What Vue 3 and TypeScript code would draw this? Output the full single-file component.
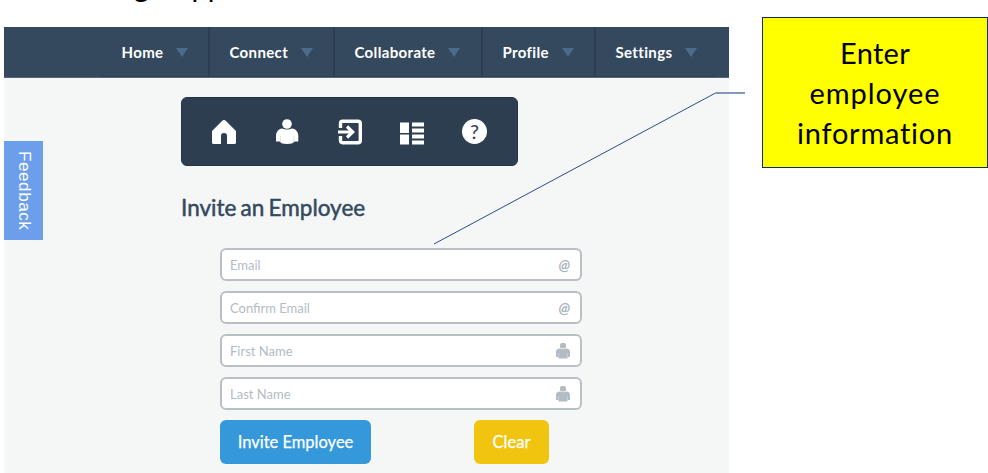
<script setup lang="ts">
interface MenuItem { label: string }
interface Field { label: string; icon: 'at' | 'person'; type: string }

const menu: MenuItem[] = [
  { label: 'Home' },
  { label: 'Connect' },
  { label: 'Collaborate' },
  { label: 'Profile' },
  { label: 'Settings' },
]

const fields: Field[] = [
  { label: 'Email', icon: 'at', type: 'text' },
  { label: 'Confirm Email', icon: 'at', type: 'text' },
  { label: 'First Name', icon: 'person', type: 'text' },
  { label: 'Last Name', icon: 'person', type: 'text' },
]
</script>

<template>
  <div class="slide">
    <div class="caption"><span>g</span><span>app</span></div>

    <div class="app">
      <nav class="nav">
        <a v-for="item in menu" :key="item.label" class="nav-item">
          <span>{{ item.label }}</span>
          <i class="caret"></i>
        </a>
      </nav>

      <main class="content">
        <div class="toolbar">
          <svg viewBox="0 0 26 26"><path d="M1 12 11 2Q13 0 15 2L25 12V23.500Q25 25 23.500 25H16V17Q16 14 13 14T10 17V25H2.500Q1 25 1 23.500Z" /></svg>
          <svg viewBox="0 0 26 26"><circle cx="13" cy="5" r="4.800" /><path d="M8 9.500Q13 11.500 18 9.500C22 10 24.300 13 24.300 17V22.500H20.500Q19 25 13 25T5.800 22.500H2V17C2 13 4.500 10 8 9.500Z" /><path class="cut" d="M6.500 17V22.500M19.700 17V22.500" /></svg>
          <svg viewBox="0 0 26 26"><path class="line" d="M3.500 9V4.500Q3.500 2.300 5.500 2.300H21Q23.300 2.300 23.300 4.500V21.500Q23.300 23.700 21 23.700H5.500Q3.500 23.700 3.500 21.500V17" /><path class="arrow" d="M1 13H15M10 7.500 15.700 13 10 18.500" /></svg>
          <svg viewBox="0 0 26 26"><path d="M1 3.500H10V14H1ZM1 15.500H10V25.500H1ZM13 3.500H25V7.500H13ZM13 9.500H25V13.500H13ZM13 15.500H25V19.500H13ZM13 21.500H25V25.500H13Z" /></svg>
          <div class="help">?</div>
        </div>

        <h1>Invite an Employee</h1>

        <form class="form" @submit.prevent>
          <div v-for="field in fields" :key="field.label" class="field">
            <input :type="field.type" :placeholder="field.label" :aria-label="field.label" />
            <span v-if="field.icon === 'at'" class="at">@</span>
            <svg v-else class="person" viewBox="0 0 14 16"><rect x="4" y="0" width="6" height="5.500" rx="1.800" /><path d="M4 5.600Q7 7 10 5.600Q14 6 14 9V14H11.500V15.500H2.500V14H0V9Q0 6 4 5.600Z" /><path class="slit" d="M2.700 10V14M11.300 10V14" /></svg>
          </div>
          <div class="actions">
            <button type="submit" class="btn invite">Invite Employee</button>
            <button type="reset" class="btn clear">Clear</button>
          </div>
        </form>
      </main>

      <div class="feedback"><span>Feedback</span></div>
    </div>

    <svg class="leader" viewBox="0 0 988 473"><path d="M434 244 715.500 93" /><path class="flat" d="M715.500 93H745" /></svg>
    <div class="callout">
      <span class="c1">Enter</span>
      <span class="c2">employee</span>
      <span class="c3">information</span>
    </div>
  </div>
</template>

<style>
body { background: #fff; }
</style>

<style scoped>
* { box-sizing: border-box; }
.slide {
  position: relative;
  width: 988px;
  height: 473px;
  overflow: hidden;
  background: #fff;
  font-family: Lato, "Liberation Sans", sans-serif;
  font-variant-ligatures: none;
}
.caption {
  height: 27px;
  padding-left: 134px;
  display: flex;
  gap: 28px;
  font-size: 29px;
  line-height: 35px;
  color: #000;
}
.caption span { margin-top: -32px; }
.app {
  position: relative;
  width: 725px;
  height: 446px;
  margin-left: 4px;
  background: #f5f7f7;
}
.nav {
  height: 51px;
  padding-left: 98px;
  display: grid;
  grid-template-columns: 108px 125px 148px 113px 119px;
  background: #34495e;
  border-bottom: 1px solid #52687c;
}
.nav-item {
  display: flex;
  align-items: center;
  gap: 13px;
  padding-left: 19.500px;
  color: #fff;
  font-size: 15px;
  font-weight: 700;
  letter-spacing: .35px;
  border-right: 2px solid #2c3e50;
  border-bottom: 1px solid #2c3e50;
}
.nav-item:last-child { border-right: 0; }
.caret {
  border: 6px solid transparent;
  border-top: 9px solid #4c6b8b;
  border-bottom: 0;
  margin-top: 2px;
}
.content { padding: 19px 0 0 177px; }
.toolbar {
  width: 337px;
  height: 69px;
  padding: 0 30px 0 29px;
  display: flex;
  align-items: center;
  justify-content: space-between;
  border-radius: 6px;
  background: #2c3e50;
  border: 1px solid #22344a;
}
.toolbar svg { width: 26px; height: 26px; fill: #fff; }
.toolbar .cut { stroke: #d5d9dd; stroke-width: .7; fill: none; }
.toolbar .line { fill: none; stroke: #fff; stroke-width: 3.400; }
.toolbar .arrow { fill: none; stroke: #fff; stroke-width: 3.200; }
.help {
  width: 25px;
  height: 25px;
  border-radius: 50%;
  background: #fff;
  color: #2c3e50;
  font: 400 20px/24px Lato, sans-serif;
  text-align: center;
}
h1 {
  margin: 27px 0 0;
  height: 30px;
  font-size: 22.500px;
  line-height: 30px;
  font-weight: 400;
  word-spacing: -1.500px;
  -webkit-text-stroke: .5px #34495e;
  color: #34495e;
  white-space: nowrap;
}
.form {
  margin: 25px 0 0 39px;
  width: 362px;
  display: flex;
  flex-direction: column;
  gap: 10px;
}
.field {
  height: 33px;
  display: flex;
  align-items: center;
  justify-content: space-between;
  padding: 0 10px 0 8px;
  border: 2px solid #b8c0c6;
  border-radius: 6px;
  background: #fff;
}
.field input {
  border: 0;
  outline: 0;
  padding: 0;
  width: 200px;
  font: 13px/20px Lato, sans-serif;
  background: none;
}
.field input::placeholder { color: #b2bcc5; opacity: 1; }
.at { color: #a9b4be; font-size: 15px; font-weight: 700; font-style: italic; line-height: 20px; margin: -2px 0 0; }
.person { width: 14px; height: 16px; fill: #b2bcc5; }
.slit { stroke: #dce1e5; stroke-width: .6; fill: none; }
.actions { display: flex; }
.btn {
  height: 44px;
  padding: 0;
  border: 0;
  border-radius: 6px;
  color: #fff;
  font: 400 16.500px/42px Lato, sans-serif;
  -webkit-text-stroke: .25px #fff;
}
.invite { width: 151px; background: #3498db; }
.clear { width: 75px; margin-left: 103px; background: #f1c40f; }
.feedback {
  position: absolute;
  left: 0;
  top: 114px;
  width: 39px;
  height: 99px;
  display: flex;
  align-items: center;
  justify-content: center;
  writing-mode: vertical-rl;
  background: #6b9eeb;
  color: #fff;
  font: 17px/20px "Liberation Sans", sans-serif;
  letter-spacing: .6px;
}
.leader { position: absolute; left: 0; top: 0; width: 988px; height: 473px; }
.leader path { fill: none; stroke: #2f4b87; stroke-width: 1; }
.leader .flat { stroke-width: 1.500; stroke: #5c75a5; }
.callout {
  position: absolute;
  left: 762px;
  top: 17px;
  width: 226px;
  height: 151px;
  padding: 15px 0 0;
  display: flex;
  flex-direction: column;
  align-items: center;
  border: 1px solid #102c58;
  background: #ff0;
  color: #000;
  font-size: 29px;
  line-height: 40px;
}
.c1 { letter-spacing: .3px; }
.c2 { letter-spacing: .95px; }
.c3 { letter-spacing: .75px; }
</style>
